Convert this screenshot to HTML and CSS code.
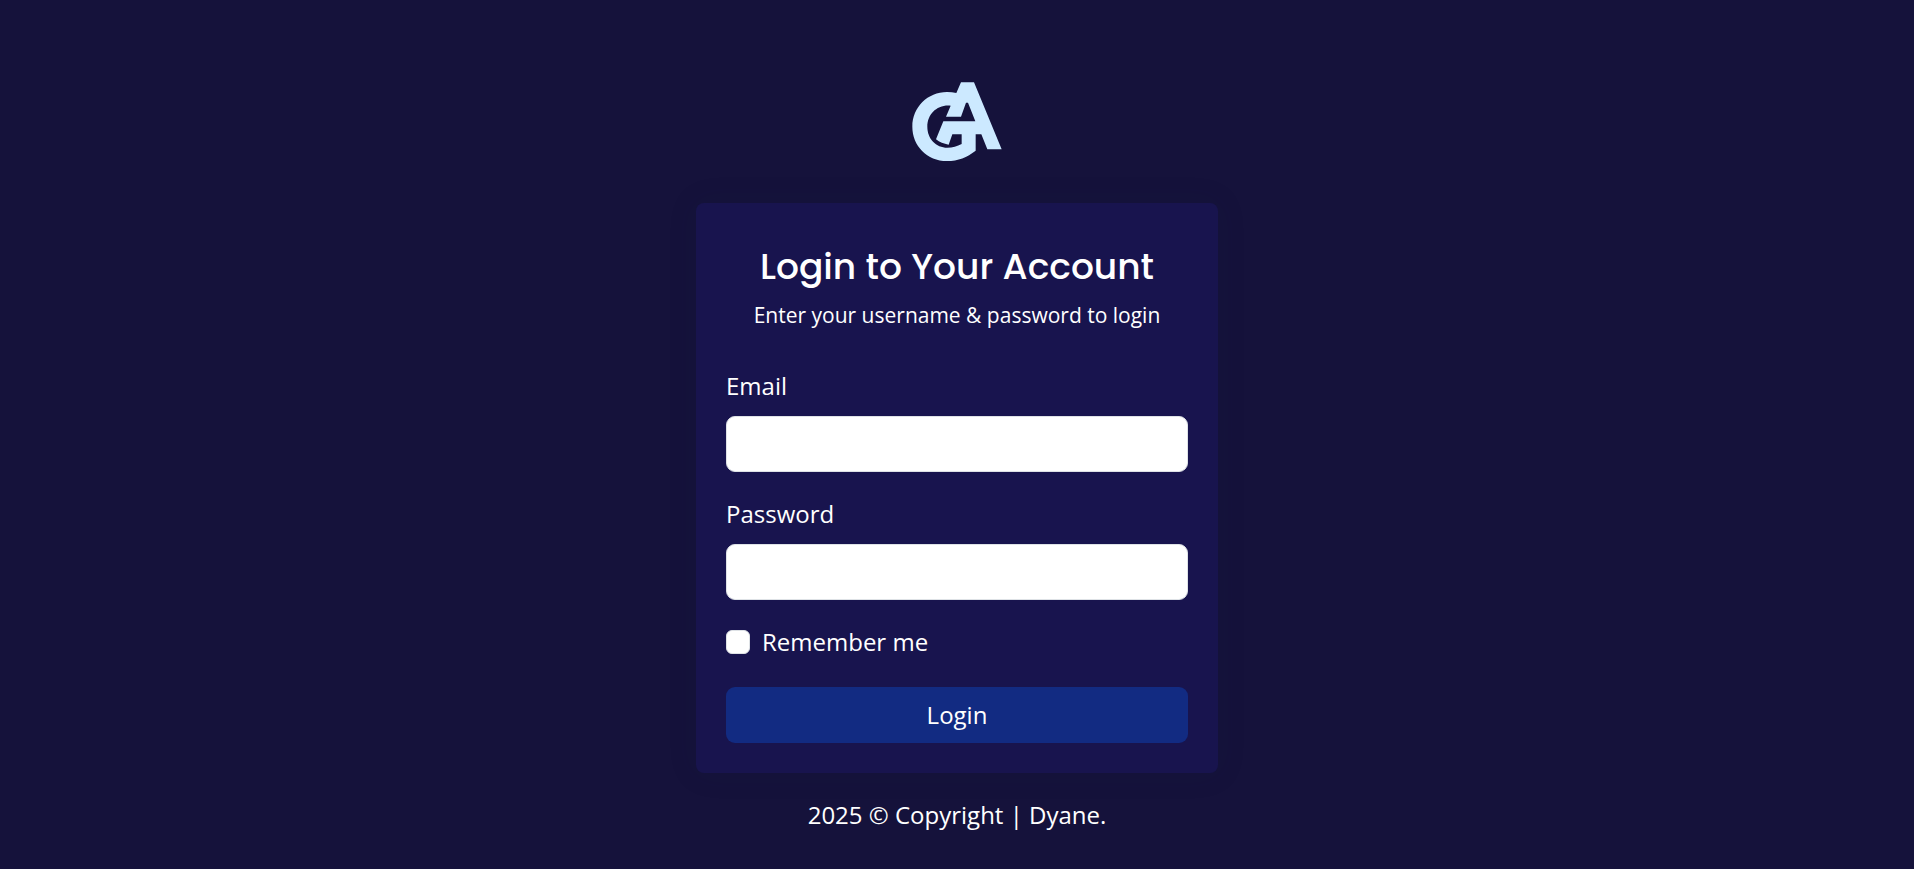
FILE: index.html
```
<!DOCTYPE html>
<html lang="en">
<head>
  <meta charset="UTF-8">
  <meta name="viewport" content="width=device-width, initial-scale=1.0">
  <title>Login</title>
  <link rel="stylesheet" href="styles.css">
</head>
<body>
  <main class="login-page">
    <!-- Logo -->
    <a href="#" class="logo" aria-label="Home">
      <svg viewBox="33 34 270 238" aria-hidden="true">
        <path fill-rule="evenodd" d="M180 35H219L302 236H259L241 191H224V240C198 260 172 271 138 271C78 271 34 225 34 168C34 110 80 64 138 64Q153 64 166 67ZM149 105C108 101 79 131 79 168C79 204 105 231 139 231Q162 231 182 220V191H154L143 222Q121 219 105 206L127 152H223L201 96H195L180 138H135Z"/>
      </svg>
    </a>

    <!-- Login card -->
    <div class="card">
      <div class="card-header">
        <h1>Login to Your Account</h1>
        <p>Enter your username &amp; password to login</p>
      </div>

      <form class="login-form">
        <div class="field">
          <label for="email">Email</label>
          <input type="email" id="email" name="email" required>
        </div>
        <div class="field">
          <label for="password">Password</label>
          <input type="password" id="password" name="password" required>
        </div>
        <div class="remember">
          <input type="checkbox" id="remember" name="remember">
          <label for="remember">Remember me</label>
        </div>
        <button type="submit">Login</button>
      </form>
    </div>

    <footer class="credits">2025 © Copyright | Dyane.</footer>
  </main>
</body>
</html>
```
FILE: styles.css
```
* {
  box-sizing: border-box;
}

body {
  margin: 0;
  font-family: "Open Sans", sans-serif;
  font-size: 24px;
  line-height: 36px;
  color: #fff;
  background-color: #15123b;
}

.login-page {
  display: flex;
  flex-direction: column;
  align-items: center;
  justify-content: center;
  min-height: 100vh;
  padding: 46px 16px 0;
}

/* Logo */
.logo {
  display: block;
  width: 90px;
  margin-bottom: 42px;
}

.logo svg {
  display: block;
  width: 100%;
  fill: #cce9ff;
}

/* Card */
.card {
  width: 100%;
  max-width: 522px;
  padding: 30px;
  border-radius: 8px;
  background-color: #18144e;
  box-shadow: 0 0 30px rgba(1, 41, 60, 0.1);
}

.card-header {
  padding: 12px 0 37px;
  text-align: center;
}

.card-header h1 {
  margin: 0 0 10px;
  font-family: Poppins, Inter, sans-serif;
  font-size: 36px;
  font-weight: 500;
  line-height: 44px;
}

.card-header p {
  margin: 0;
  font-size: 21px;
  line-height: 32px;
}

/* Form */
.login-form {
  display: flex;
  flex-direction: column;
  gap: 24px;
}

.field label {
  display: block;
  margin-bottom: 12px;
}

.field input {
  display: block;
  width: 100%;
  height: 56px;
  padding: 8px 18px;
  border: 1px solid #dee2e6;
  border-radius: 9px;
  font: inherit;
  color: #212529;
  background-color: #fff;
}

.remember {
  display: flex;
  align-items: center;
  gap: 12px;
}

.remember input {
  appearance: none;
  width: 24px;
  height: 24px;
  margin: 0;
  border: 1px solid #dee2e6;
  border-radius: 6px;
  background-color: #fff;
}

.remember input:checked {
  background-color: #122b82;
}

.login-form button {
  height: 56px;
  margin-top: 3px;
  border: none;
  border-radius: 9px;
  font: inherit;
  color: #fff;
  background-color: #122b82;
  cursor: pointer;
}

.credits {
  margin-top: 24px;
}
```
